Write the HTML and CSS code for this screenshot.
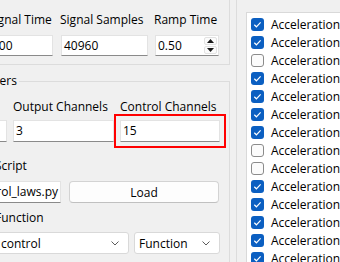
FILE: index.html
```html
<!DOCTYPE html>
<html lang="en">
<head>
<meta charset="UTF-8" />
<title>Controller Setup</title>
<link rel="stylesheet" href="styles.css">
</head>
<body>

<div class="window">

  <div class="left">

    <div class="top-group">
      <div class="field f-time">
        <span class="label">Signal Time</span>
        <div class="edit">100</div>
      </div>
      <div class="field f-samples">
        <span class="label">Signal Samples</span>
        <div class="edit">40960</div>
      </div>
      <div class="field f-ramp">
        <span class="label">Ramp Time</span>
        <div class="edit spin">
          <span>0.50</span>
          <div class="spin-btns">
            <div class="spin-btn"><svg width="7" height="4" viewBox="0 0 7 4"><polygon points="0,4 3.5,0 7,4" fill="#1a1a1a"/></svg></div>
            <div class="spin-btn"><svg width="7" height="4" viewBox="0 0 7 4"><polygon points="0,0 3.5,4 7,0" fill="#1a1a1a"/></svg></div>
          </div>
        </div>
      </div>
    </div>

    <fieldset class="params">
      <legend>Parameters</legend>
      <div class="params-body">

        <div class="row channels">
          <div class="field">
            <span class="label">Input Channels</span>
            <div class="edit tall">2</div>
          </div>
          <div class="field">
            <span class="label">Output Channels</span>
            <div class="edit tall">3</div>
          </div>
          <div class="field">
            <span class="label">Control Channels</span>
            <div class="edit tall highlight">15</div>
          </div>
        </div>

        <div class="section">
          <span class="label">Script</span>
          <div class="row script-row">
            <div class="edit tall script-path"><span>control_laws.py</span></div>
            <button class="btn">Load</button>
          </div>
        </div>

        <div class="section">
          <span class="label">Function</span>
          <div class="row func-row">
            <div class="combo combo-name">
              <span>control</span>
              <svg width="8" height="5" viewBox="0 0 8 5"><polyline points="0.5,0.5 4,4 7.5,0.5" fill="none" stroke="#5c5c5c" stroke-width="1"/></svg>
            </div>
            <div class="combo combo-type">
              <span>Function</span>
              <svg width="8" height="5" viewBox="0 0 8 5"><polyline points="0.5,0.5 4,4 7.5,0.5" fill="none" stroke="#5c5c5c" stroke-width="1"/></svg>
            </div>
          </div>
        </div>

      </div>
    </fieldset>

  </div>

  <div class="right">
    <div class="list" id="signal-list"></div>
  </div>

</div>

<script>
  // estado de cada sinal na lista
  const checked = [1, 1, 0, 1, 1, 1, 1, 0, 0, 1, 1, 1, 1, 1, 1];
  const listEl = document.getElementById("signal-list");

  checked.forEach(on => {
    const row = document.createElement("div");
    row.className = "item";
    row.innerHTML = `
      <span class="check ${on ? "on" : ""}">
        ${on ? '<svg width="13" height="13" viewBox="0 0 13 13"><polyline points="3.3,6.8 5.4,8.8 9.6,4.4" fill="none" stroke="#fff" stroke-width="1.2"/></svg>' : ""}
      </span>
      <span class="item-text">Acceleration</span>
    `;
    listEl.appendChild(row);
  });
</script>

</body>
</html>
```

FILE: styles.css
```css
body {
  margin: 0;
  width: 340px;
  height: 262px;
  overflow: hidden;
  background: #f0f0f0;
  font-family: "Open Sans", sans-serif;
  font-size: 12px;
  color: #000;
}
.window {
  display: flex;
  height: 262px;
}
.left {
  flex: none;
  width: 340px;
  margin-left: -110px;
}
.label {
  display: block;
  line-height: 16px;
  white-space: nowrap;
}
.field {
  display: flex;
  flex-direction: column;
}
.field .label {
  margin-left: -1px;
}

/* caixas de texto */
.edit {
  box-sizing: border-box;
  height: 21px;
  background: #fff;
  border: 1px solid #e3e3e3;
  border-bottom-color: #8a8a8a;
  padding: 0 2px;
  line-height: 19px;
  white-space: nowrap;
  overflow: hidden;
}
.edit.tall {
  height: 22px;
  line-height: 20px;
}

/* Signal group */
.top-group {
  display: flex;
  padding: 12px 0 8px 99px;
  border-right: 1px solid #dcdcdc;
  border-bottom: 1px solid #dcdcdc;
}
.top-group .label {
  margin-bottom: 7px;
}
.f-time { width: 64px; }
.f-samples { width: 87px; margin-left: 8px; }
.f-ramp { width: 64px; margin-left: 7px; }
.spin {
  display: flex;
  justify-content: space-between;
  padding-right: 0;
}
.spin-btns {
  display: flex;
  flex-direction: column;
  gap: 1px;
  padding: 1px 1px 0 0;
}
.spin-btn {
  box-sizing: border-box;
  width: 13px;
  height: 8px;
  border: 1px solid #e2e2e2;
  border-radius: 2px;
  background: #fbfbfb;
  display: flex;
  align-items: center;
  justify-content: center;
}
.spin-btn svg {
  display: block;
}

/* Parameters */
.params {
  margin: 8px 0 0;
  padding: 0;
  min-width: 0;
  border: 1px solid #dcdcdc;
  border-bottom: none;
  height: 200px;
}
.params legend {
  margin-left: 59px;
  padding: 0 2px;
  line-height: 16px;
}
.params-body {
  padding: 10px 0 0 15px;
}
.row {
  display: flex;
}
.channels {
  gap: 6px;
}
.channels .field {
  width: 101px;
}
.channels .field:last-child {
  width: 100px;
}
.channels .label {
  margin-left: 0;
  margin-bottom: 5px;
}
.highlight {
  outline: 2px solid #ff0000;
  outline-offset: 4px;
}
.section {
  margin-left: 88px;
}
.section .label {
  margin: 16px 0 7px 1px;
}
.section + .section .label {
  margin-top: 7px;
  margin-bottom: 6px;
}
.script-row {
  gap: 8px;
}
.script-path {
  width: 67px;
  display: flex;
  justify-content: flex-end;
  padding: 0 2px 0 0;
}
.btn {
  box-sizing: border-box;
  width: 150px;
  height: 22px;
  margin: 0;
  padding: 0;
  background: #fdfdfd;
  border: 1px solid #d3d3d3;
  border-bottom-color: #c0c0c0;
  border-radius: 4px;
  font-family: "Open Sans", sans-serif;
  font-size: 12px;
  color: #000;
}
.func-row {
  gap: 5px;
}
.combo {
  box-sizing: border-box;
  height: 22px;
  background: #fff;
  border: 1px solid #d9d9d9;
  border-radius: 3px;
  display: flex;
  align-items: center;
  justify-content: space-between;
  padding: 0 9px 0 6px;
}
.combo svg {
  display: block;
}
.combo-name { width: 135px; }
.combo-type { width: 86px; padding-left: 4px; }

/* lista de sinais */
.right {
  flex: 1;
  margin-left: 6px;
  border-left: 1px solid #dcdcdc;
  padding-left: 9px;
}
.list {
  margin-top: 12px;
  height: 300px;
  background: #fff;
  border: 1px solid #d9d9d9;
  border-right: none;
  padding: 2px 0 0 4px;
}
.item {
  display: flex;
  align-items: center;
  height: 18px;
  white-space: nowrap;
}
.check {
  box-sizing: border-box;
  flex: none;
  width: 13px;
  height: 13px;
  border: 1px solid #8b8b8b;
  border-radius: 3px;
  background: #fbfbfb;
}
.check.on {
  border: none;
  background: #0b5fc1;
}
.check svg {
  display: block;
}
.item-text {
  margin-left: 7px;
}
```
